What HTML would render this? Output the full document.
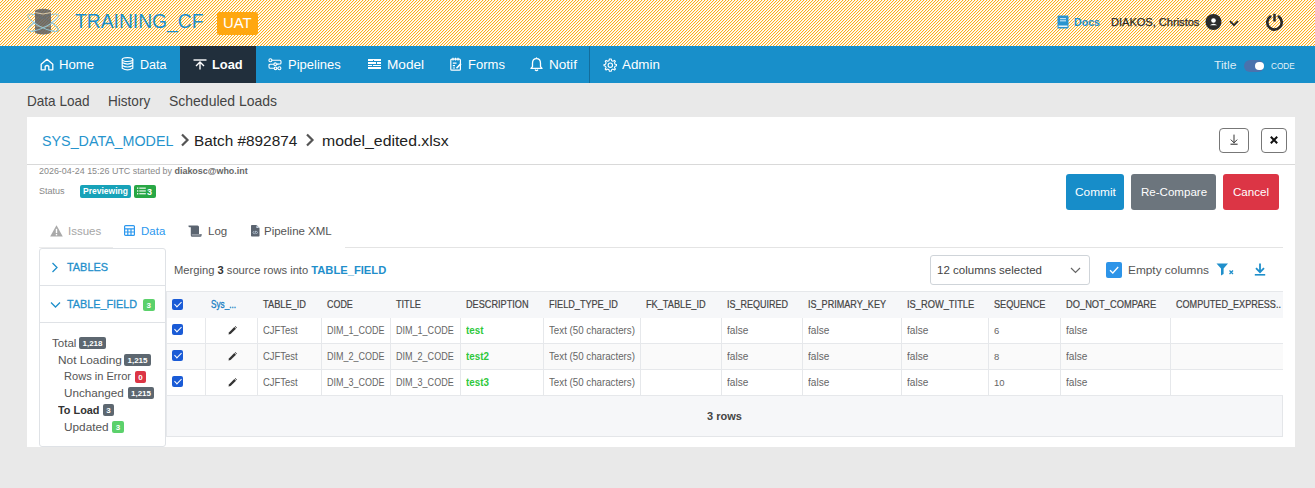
<!DOCTYPE html>
<html><head><meta charset="utf-8">
<style>
*{box-sizing:border-box;margin:0;padding:0}
html,body{width:1315px;height:488px;overflow:hidden}
body{background:#e9e9e9;font-family:"Liberation Sans",sans-serif;color:#333;position:relative}
.a{position:absolute;white-space:nowrap}
#nav{position:absolute;left:0;top:46px;width:1315px;height:37px;background:#188fca}
.nt{position:absolute;top:11px;color:#fff;font-size:13px;line-height:16px;white-space:nowrap}
.ic{position:absolute}
#card{position:absolute;left:27px;top:117px;width:1268px;height:330px;background:#fff}
.sub{position:absolute;top:93.3px;font-size:14.5px;line-height:16px;color:#444;white-space:nowrap}
.btn2{position:absolute;border:1px solid #777;border-radius:4px;background:#fff}
.btn{position:absolute;height:36px;border-radius:3px;color:#fff;font-size:12px;line-height:36px;text-align:center;white-space:nowrap}
.bt{top:185px;font-size:11.5px;line-height:14px;color:#fff}
.tab{position:absolute;top:223px;font-size:11.5px;line-height:16px;white-space:nowrap}
.lp{font-size:11px;line-height:14px;color:#1f8fcb;-webkit-text-stroke:0.3px currentColor}
.bdg{position:absolute;height:12px;border-radius:2px;color:#fff;font-size:8px;line-height:13.5px;font-weight:bold;text-align:center;white-space:nowrap}
.bdg.g{background:#5d6770}
.st{font-size:11.5px;line-height:14px;color:#555}
.cb{position:absolute;width:11px;height:11px;border-radius:2px;background:#1a5bd6}
.cb::after{content:"";position:absolute;left:3.5px;top:1.2px;width:3px;height:6px;border:solid #fff;border-width:0 1.6px 1.6px 0;transform:rotate(45deg)}
.th{position:absolute;top:297px;-webkit-text-stroke:0.2px currentColor;font-size:10.5px;line-height:14px;color:#444;white-space:nowrap}
.th.blue{color:#1a80c4;-webkit-text-stroke:0.35px currentColor}
.td{position:absolute;margin-top:5px;font-size:11px;line-height:14px;color:#666;white-space:nowrap}
.td.green{color:#2ec83c;font-weight:bold}
</style><style id="fit">
#title{transform:scaleX(0.918);transform-origin:0 0}
#uat{transform:scaleX(0.958);transform-origin:0 0}
#docs{transform:scaleX(0.966);transform-origin:0 0}
#user{transform:scaleX(1.004);transform-origin:0 0}
#n_title{transform:scaleX(1.051);transform-origin:0 0}
#n_code{transform:scaleX(0.860);transform-origin:0 0}
#n_home{transform:scaleX(1.015);transform-origin:0 0}
#n_data{transform:scaleX(0.968);transform-origin:0 0}
#n_load{transform:scaleX(0.988);transform-origin:0 0}
#n_pipe{transform:scaleX(0.999);transform-origin:0 0}
#n_model{transform:scaleX(1.047);transform-origin:0 0}
#n_forms{transform:scaleX(1.002);transform-origin:0 0}
#n_notif{transform:scaleX(1.044);transform-origin:0 0}
#n_admin{transform:scaleX(1.026);transform-origin:0 0}
#s1{transform:scaleX(0.935);transform-origin:0 0}
#s2{transform:scaleX(0.935);transform-origin:0 0}
#s3{transform:scaleX(0.964);transform-origin:0 0}
#bc1{transform:scaleX(0.923);transform-origin:0 0}
#bc2{transform:scaleX(0.990);transform-origin:0 0}
#bc3{transform:scaleX(1.020);transform-origin:0 0}
#meta{transform:scaleX(0.992);transform-origin:0 0}
#status{transform:scaleX(0.941);transform-origin:0 0}
#b_commit{transform:scaleX(1.030);transform-origin:0 0}
#b_rec{transform:scaleX(1.004);transform-origin:0 0}
#b_cancel{transform:scaleX(1.008);transform-origin:0 0}
#merge{transform:scaleX(1.016);transform-origin:0 0}
#st1{transform:scaleX(1.004);transform-origin:0 0}
#st2{transform:scaleX(1.029);transform-origin:0 0}
#st3{transform:scaleX(0.962);transform-origin:0 0}
#st4{transform:scaleX(1.018);transform-origin:0 0}
#st5{transform:scaleX(0.946);transform-origin:0 0}
#st6{transform:scaleX(1.028);transform-origin:0 0}
#lp1{transform:scaleX(0.991);transform-origin:0 0}
#lp2{transform:scaleX(0.983);transform-origin:0 0}
#selt{transform:scaleX(1.047);transform-origin:0 0}
#empt{transform:scaleX(1.077);transform-origin:0 0}
#h1{transform:scaleX(0.779);transform-origin:0 0}
#h2{transform:scaleX(0.881);transform-origin:0 0}
#h3{transform:scaleX(0.850);transform-origin:0 0}
#h4{transform:scaleX(0.867);transform-origin:0 0}
#h5{transform:scaleX(0.871);transform-origin:0 0}
#h6{transform:scaleX(0.868);transform-origin:0 0}
#h7{transform:scaleX(0.875);transform-origin:0 0}
#h8{transform:scaleX(0.857);transform-origin:0 0}
#h9{transform:scaleX(0.864);transform-origin:0 0}
#h10{transform:scaleX(0.886);transform-origin:0 0}
#h11{transform:scaleX(0.872);transform-origin:0 0}
#h12{transform:scaleX(0.886);transform-origin:0 0}
#h13{transform:scaleX(0.865);transform-origin:0 0}
#c0_2{transform:scaleX(0.860);transform-origin:0 0}
#c0_3{transform:scaleX(0.818);transform-origin:0 0}
#c0_4{transform:scaleX(0.821);transform-origin:0 0}
#c0_5{transform:scaleX(0.895);transform-origin:0 0}
#c0_6{transform:scaleX(0.884);transform-origin:0 0}
#c0_8{transform:scaleX(0.916);transform-origin:0 0}
#c0_9{transform:scaleX(0.916);transform-origin:0 0}
#c0_10{transform:scaleX(0.916);transform-origin:0 0}
#c0_12{transform:scaleX(0.916);transform-origin:0 0}
#c1_2{transform:scaleX(0.860);transform-origin:0 0}
#c1_3{transform:scaleX(0.818);transform-origin:0 0}
#c1_4{transform:scaleX(0.821);transform-origin:0 0}
#c1_5{transform:scaleX(0.891);transform-origin:0 0}
#c1_6{transform:scaleX(0.884);transform-origin:0 0}
#c1_8{transform:scaleX(0.916);transform-origin:0 0}
#c1_9{transform:scaleX(0.916);transform-origin:0 0}
#c1_10{transform:scaleX(0.916);transform-origin:0 0}
#c1_12{transform:scaleX(0.916);transform-origin:0 0}
#c2_2{transform:scaleX(0.860);transform-origin:0 0}
#c2_3{transform:scaleX(0.818);transform-origin:0 0}
#c2_4{transform:scaleX(0.821);transform-origin:0 0}
#c2_5{transform:scaleX(0.891);transform-origin:0 0}
#c2_6{transform:scaleX(0.884);transform-origin:0 0}
#c2_8{transform:scaleX(0.916);transform-origin:0 0}
#c2_9{transform:scaleX(0.916);transform-origin:0 0}
#c2_10{transform:scaleX(0.916);transform-origin:0 0}
#c2_12{transform:scaleX(0.916);transform-origin:0 0}
</style>
</head><body>
<svg width="1315" height="46" style="position:absolute;left:0;top:0" shape-rendering="crispEdges">
<defs><pattern id="stp" width="3" height="3" patternUnits="userSpaceOnUse">
<rect width="3" height="3" fill="#fff"/>
<rect x="2" y="0" width="1" height="1" fill="#ffae18"/><rect x="1" y="1" width="1" height="1" fill="#ffae18"/><rect x="0" y="2" width="1" height="1" fill="#ffae18"/>
<rect x="0" y="0" width="1" height="1" fill="#fff1d6"/><rect x="2" y="1" width="1" height="1" fill="#fff1d6"/><rect x="1" y="2" width="1" height="1" fill="#fff1d6"/>
</pattern></defs><rect width="1315" height="46" fill="url(#stp)"/></svg>

<!-- logo -->
<svg class="ic" style="left:22px;top:5px" width="44" height="35" viewBox="0 0 44 35">
 <defs><clipPath id="lowc"><rect x="0" y="17.75" width="44" height="20"/></clipPath></defs>
 <g fill="none" stroke="#98c8d4" stroke-width="1">
 <ellipse cx="21" cy="17.75" rx="17" ry="4.6" transform="rotate(27 21 17.75)"/>
 <ellipse cx="21" cy="17.75" rx="17" ry="4.6" transform="rotate(-27 21 17.75)"/>
 </g>
 <g opacity="0.86" fill="#5f5f5f">
 <ellipse cx="21" cy="6" rx="8" ry="2.2"/>
 <rect x="13" y="6" width="16" height="21.2"/>
 <ellipse cx="21" cy="27.2" rx="8" ry="2.2"/>
 </g>
 <path d="M13.3 7.6 Q21 10.4 28.7 7.6" stroke="#e8d6b0" stroke-width="0.9" fill="none"/>
 <path d="M13.3 20.8 Q21 23.6 28.7 20.8" stroke="#e8d6b0" stroke-width="0.7" fill="none" opacity="0.6"/>
 <g fill="none" stroke="#98c8d4" stroke-width="1" clip-path="url(#lowc)">
 <ellipse cx="21" cy="17.75" rx="17" ry="4.6" transform="rotate(27 21 17.75)"/>
 <ellipse cx="21" cy="17.75" rx="17" ry="4.6" transform="rotate(-27 21 17.75)"/>
 </g>
</svg>
<div class="a" id="title" style="left:75px;top:9px;font-size:21px;line-height:24px;color:#1d8fc9">TRAINING_CF</div>
<div class="a" style="left:217px;top:12px;width:41px;height:23px;background:#ffa70f;border-radius:3px"></div><div class="a" id="uat" style="left:223px;top:12px;color:#fff;font-size:15.5px;line-height:21.4px">UAT</div>

<!-- header right -->
<svg class="ic" style="left:1057px;top:15px" width="12" height="14" viewBox="0 0 12 14">
 <rect x="0.5" y="0.5" width="11" height="13" rx="1.2" fill="#2a94cf"/>
 <rect x="3" y="3" width="6" height="1.2" fill="#bfe2f5"/><rect x="3" y="5.2" width="6" height="1.2" fill="#bfe2f5"/>
 <rect x="1.5" y="10.5" width="9" height="1.5" fill="#e6f4fb"/>
</svg>
<div class="a" id="docs" style="left:1074px;top:15px;font-size:11px;line-height:14px;color:#1f8fcc;font-weight:bold">Docs</div>
<div class="a" id="user" style="left:1111px;top:15px;font-size:11px;line-height:14px;color:#2b2b2b;-webkit-text-stroke:0.25px currentColor">DIAKOS, Christos</div>
<svg class="ic" style="left:1205px;top:14px" width="17" height="16" viewBox="0 0 17 16">
 <circle cx="8.5" cy="8" r="8" fill="#2b2b2b"/>
 <circle cx="8.5" cy="6.5" r="2.3" fill="#fff"/>
 <path d="M4.8 11.2 Q8.5 8.2 12.2 11.2 Z" fill="#fff"/>
</svg>
<svg class="ic" style="left:1229px;top:19.5px" width="10" height="7" viewBox="0 0 10 7">
 <path d="M1 1.2 L5 5.2 L9 1.2" stroke="#2b2b2b" stroke-width="1.8" fill="none"/>
</svg>
<svg class="ic" style="left:1265px;top:12px" width="19" height="20" viewBox="0 0 19 20">
 <path d="M5.2 4.6 A7.2 7.2 0 1 0 13.8 4.6" stroke="#2b2b2b" stroke-width="2.7" fill="none" stroke-linecap="round"/>
 <line x1="9.5" y1="1.8" x2="9.5" y2="9.5" stroke="#2b2b2b" stroke-width="2.5" stroke-linecap="butt"/>
</svg>

<!-- nav -->
<div id="nav">
 <div style="position:absolute;left:180px;top:0;width:76px;height:37px;background:#212f3c"></div>
 <div style="position:absolute;left:589px;top:0;width:1px;height:37px;background:#136d9c"></div>
 <svg class="ic" style="left:40px;top:12px" width="14" height="13" viewBox="0 0 14 13">
  <path d="M1.2 6.2 L7 1.2 L12.8 6.2 L12.8 11.8 L8.8 11.8 L8.8 8.2 Q7 6.8 5.2 8.2 L5.2 11.8 L1.2 11.8 Z" stroke="#fff" stroke-width="1.3" fill="none" stroke-linejoin="round"/>
 </svg>
 <div class="nt" id="n_home" style="left:59px">Home</div>
 <svg class="ic" style="left:121px;top:11px" width="13" height="14" viewBox="0 0 13 14">
  <ellipse cx="6.5" cy="2.6" rx="5.3" ry="1.9" stroke="#fff" stroke-width="1.2" fill="none"/>
  <path d="M1.2 2.6 V11.2 Q6.5 14.6 11.8 11.2 V2.6 M1.2 5.6 Q6.5 8.6 11.8 5.6 M1.2 8.5 Q6.5 11.5 11.8 8.5" stroke="#fff" stroke-width="1.2" fill="none"/>
 </svg>
 <div class="nt" id="n_data" style="left:140px">Data</div>
 <svg class="ic" style="left:193px;top:13px" width="14" height="11" viewBox="0 0 14 11">
  <line x1="0.5" y1="1" x2="13.5" y2="1" stroke="#fff" stroke-width="1.4"/>
  <path d="M7 3 V10.5 M3 7 L7 3 L11 7" stroke="#fff" stroke-width="1.4" fill="none"/>
 </svg>
 <div class="nt" id="n_load" style="left:212px;font-weight:bold">Load</div>
 <svg class="ic" style="left:268px;top:12px" width="14" height="13" viewBox="0 0 14 13">
  <g stroke="#fff" stroke-width="1.1" fill="none">
  <circle cx="2.4" cy="2.2" r="1.5"/><path d="M3.9 2.2 H12 Q13 2.2 13 3.4 V5 Q13 6 12 6 H9"/>
  <circle cx="7.2" cy="6.2" r="1.3"/><path d="M5.9 6.2 H2.2 Q1 6.2 1 7.4 V9 Q1 10.3 2.2 10.3 H6"/>
  <circle cx="7.5" cy="10.3" r="1.3"/><circle cx="11.4" cy="10.3" r="1.5"/><path d="M8.8 10.3 H9.9 M9 6.2 H10.5"/>
  </g>
 </svg>
 <div class="nt" id="n_pipe" style="left:288px">Pipelines</div>
 <svg class="ic" style="left:367.5px;top:13px" width="13" height="10" viewBox="0 0 13 10" shape-rendering="crispEdges">
  <rect x="0" y="0.3" width="12.5" height="9.4" fill="#fff"/>
  <g fill="#188fca"><rect x="0" y="2.3" width="12.5" height="0.9"/><rect x="0" y="4.6" width="12.5" height="0.9"/><rect x="0" y="6.9" width="12.5" height="0.9"/>
  <rect x="5" y="1.2" width="0.9" height="1.1"/><rect x="8" y="3.2" width="0.9" height="1.4"/><rect x="4" y="5.5" width="0.9" height="1.4"/><rect x="7.5" y="7.8" width="0.9" height="1"/></g>
 </svg>
 <div class="nt" id="n_model" style="left:387px">Model</div>
 <svg class="ic" style="left:450px;top:11px" width="12" height="14" viewBox="0 0 12 14">
  <g stroke="#fff" stroke-width="1.2" fill="none">
  <rect x="0.8" y="2.2" width="9.6" height="11" rx="1"/><path d="M3 0.8 V3.4 M5.5 0.8 V3.4 M8 0.8 V3.4 M2.8 6.2 H6.5 M2.8 8.6 H5 M2.8 11 H5"/>
  <path d="M6.5 11.2 L11 6.6" stroke-width="1.6"/></g>
 </svg>
 <div class="nt" id="n_forms" style="left:468px">Forms</div>
 <svg class="ic" style="left:530px;top:11px" width="13" height="15" viewBox="0 0 13 15">
  <path d="M6.5 1.6 Q10.5 1.6 10.5 6.2 V9.6 L12 11.4 H1 L2.5 9.6 V6.2 Q2.5 1.6 6.5 1.6 Z" stroke="#fff" stroke-width="1.3" fill="none" stroke-linejoin="round"/>
  <path d="M5 12.6 Q6.5 14.6 8 12.6" stroke="#fff" stroke-width="1.3" fill="none"/>
  <line x1="6.5" y1="0.4" x2="6.5" y2="1.8" stroke="#fff" stroke-width="1.2"/>
 </svg>
 <div class="nt" id="n_notif" style="left:549px">Notif</div>
 <svg class="ic" style="left:603px;top:12px" width="14" height="14" viewBox="0 0 14 14">
  <path d="M7 1 L8.2 1 L8.6 2.7 L10 3.3 L11.5 2.4 L12.4 3.3 L11.5 4.8 L12.1 6.2 L13.6 6.5 V7.8 L12.1 8.2 L11.5 9.6 L12.4 11.1 L11.5 12 L10 11.1 L8.6 11.7 L8.2 13.3 H6.4 L6 11.7 L4.6 11.1 L3.1 12 L2.2 11.1 L3.1 9.6 L2.5 8.2 L1 7.8 V6.5 L2.5 6.2 L3.1 4.8 L2.2 3.3 L3.1 2.4 L4.6 3.3 L6 2.7 L6.4 1 Z" stroke="#fff" stroke-width="1.1" fill="none" stroke-linejoin="round"/>
  <circle cx="7.3" cy="7.2" r="2.2" stroke="#fff" stroke-width="1.1" fill="none"/>
 </svg>
 <div class="nt" id="n_admin" style="left:622px">Admin</div>
 <div class="a" id="n_title" style="left:1214px;top:11px;font-size:11.5px;line-height:16px;color:#dcecf6">Title</div>
 <div style="position:absolute;left:1244px;top:14px;width:20px;height:12px;border-radius:6px;background:#4a72ad"></div>
 <div style="position:absolute;left:1255px;top:15.8px;width:8.5px;height:8.5px;border-radius:50%;background:#fff"></div>
 <div class="a" id="n_code" style="left:1271px;top:12px;font-size:9.5px;line-height:16px;color:#e6f2f9">CODE</div>
</div>

<!-- sub nav -->
<div class="sub" id="s1" style="left:27px">Data Load</div>
<div class="sub" id="s2" style="left:108px">History</div>
<div class="sub" id="s3" style="left:169px">Scheduled Loads</div>

<div id="card"></div>
<!-- card header -->
<div class="a" id="bc1" style="left:41.5px;top:131.5px;font-size:15.5px;line-height:18px;color:#2694cd">SYS_DATA_MODEL</div>
<svg class="ic" style="left:180px;top:133px" width="10" height="14" viewBox="0 0 10 14"><path d="M2 1.5 L7.5 7 L2 12.5" stroke="#555" stroke-width="2.2" fill="none"/></svg>
<div class="a" id="bc2" style="left:194.3px;top:131.5px;font-size:15.5px;line-height:18px;color:#222">Batch #892874</div>
<svg class="ic" style="left:305px;top:133px" width="10" height="14" viewBox="0 0 10 14"><path d="M2 1.5 L7.5 7 L2 12.5" stroke="#555" stroke-width="2.2" fill="none"/></svg>
<div class="a" id="bc3" style="left:322px;top:131.5px;font-size:15.5px;line-height:18px;color:#222">model_edited.xlsx</div>
<div class="btn2" style="left:1219px;top:128px;width:30px;height:25px"></div>
<svg class="ic" style="left:1229.5px;top:133.5px" width="9" height="11" viewBox="0 0 9 11"><path d="M4 0.6 V9.2 M0.8 5.6 L4 8.8 L7.2 5.6" stroke="#333" stroke-width="1" fill="none"/><path d="M0.5 10.2 H7.6" stroke="#222" stroke-width="1"/></svg>
<div class="btn2" style="left:1261px;top:128px;width:26px;height:25px"></div>
<svg class="ic" style="left:1269px;top:135px" width="10" height="10" viewBox="0 0 10 10"><path d="M1.8 1.8 L8.2 8.2 M8.2 1.8 L1.8 8.2" stroke="#111" stroke-width="2"/></svg>
<div style="position:absolute;left:27px;top:164px;width:1268px;height:1px;background:#d9d9d9"></div>
<div class="a" id="meta" style="left:39px;top:166px;font-size:9px;line-height:11px;color:#888">2026-04-24 15:26 UTC started by <b style="color:#666">diakosc@who.int</b></div>
<div class="a" id="status" style="left:39px;top:184.5px;font-size:9.6px;line-height:12px;color:#888">Status</div>
<div class="a" id="prev" style="left:80px;top:185px;width:51px;height:12.5px;border-radius:2px;background:#17a2b8;color:#fff;font-size:8.5px;line-height:12.5px;font-weight:bold;text-align:center">Previewing</div>
<div class="a" style="left:134px;top:185px;width:22px;height:12.5px;border-radius:2px;background:#28a745"></div>
<svg class="ic" style="left:137px;top:187px" width="9" height="8" viewBox="0 0 9 8"><g fill="#fff"><rect x="0" y="0.5" width="1.3" height="1.3"/><rect x="0" y="3.3" width="1.3" height="1.3"/><rect x="0" y="6.1" width="1.3" height="1.3"/><rect x="2.3" y="0.6" width="6.5" height="1.1"/><rect x="2.3" y="3.4" width="6.5" height="1.1"/><rect x="2.3" y="6.2" width="6.5" height="1.1"/></g></svg>
<div class="a" style="left:147px;top:186px;font-size:9px;line-height:12px;color:#fff;font-weight:bold">3</div>
<div class="btn" style="left:1066px;top:174px;width:58px;background:#178dc9"></div><div class="a bt" id="b_commit" style="left:1075px">Commit</div>
<div class="btn" style="left:1131px;top:174px;width:85px;background:#6c757d"></div><div class="a bt" id="b_rec" style="left:1140.5px">Re-Compare</div>
<div class="btn" style="left:1223px;top:174px;width:56px;background:#dc3545"></div><div class="a bt" id="b_cancel" style="left:1233px">Cancel</div>
<!-- tabs -->
<svg class="ic" style="left:50px;top:225px" width="13" height="12" viewBox="0 0 13 12"><path d="M6.5 0.3 L12.8 11.5 H0.2 Z" fill="#a9a9a9"/><rect x="5.8" y="3.8" width="1.4" height="4.3" fill="#fff"/><rect x="5.8" y="9" width="1.4" height="1.4" fill="#fff"/></svg>
<div class="tab" id="t1" style="left:68px;color:#a6a6a6">Issues</div>
<svg class="ic" style="left:124px;top:225px" width="11" height="11" viewBox="0 0 11 11"><g stroke="#2c98ee" stroke-width="1.2" fill="none"><rect x="0.6" y="0.6" width="9.8" height="9.8" rx="1"/><path d="M0.6 3.8 H10.4 M0.6 7 H10.4 M3.8 3.8 V10.4 M7 3.8 V10.4"/></g></svg>
<div class="tab" id="t2" style="left:141px;color:#2c98ee">Data</div>
<svg class="ic" style="left:188px;top:224.5px" width="14" height="12" viewBox="0 0 14 12"><path d="M0.5 0.5 H9.5 Q11 0.5 11 2 V9 H13.6 V10.3 Q13.6 11.8 12.2 11.8 H4.2 Q2.8 11.8 2.8 10.3 V2.2 H1.5 Q0.5 2.2 0.5 1.2 Z" fill="#5b6470"/><path d="M3.8 9.9 H12.6" stroke="#dfe3e8" stroke-width="0.7"/></svg>
<div class="tab" id="t3" style="left:208px;color:#555">Log</div>
<svg class="ic" style="left:250.5px;top:225px" width="9" height="12" viewBox="0 0 9 12"><path d="M0 0.8 Q0 0 0.8 0 H5.6 L8.5 2.9 V10.8 Q8.5 11.4 7.8 11.4 H0.8 Q0 11.4 0 10.8 Z" fill="#5b6470"/><path d="M5.4 0.2 V3.1 H8.3" fill="#c9d6e3"/><path d="M3.2 6 L2 7.5 L3.2 9 M5.3 6 L6.5 7.5 L5.3 9 M4.6 5.8 L3.9 9.2" stroke="#cfe0f0" stroke-width="0.7" fill="none"/></svg>
<div class="tab" id="t4" style="left:264px;color:#555">Pipeline XML</div>
<div style="position:absolute;left:345px;top:247px;width:938px;height:1px;background:#e4e4e4"></div>
<div style="position:absolute;left:39px;top:247px;width:74px;height:1px;background:#ececec"></div>
<!-- left panel -->
<div style="position:absolute;left:39px;top:248px;width:127px;height:199px;border:1px solid #dfe2e6;border-radius:3px;background:#fff"></div>
<div style="position:absolute;left:40px;top:285px;width:125px;height:1px;background:#dfe2e6"></div>
<div style="position:absolute;left:40px;top:322px;width:125px;height:1px;background:#dfe2e6"></div>
<svg class="ic" style="left:51px;top:262px" width="8" height="11" viewBox="0 0 8 11"><path d="M1.5 1 L6 5.5 L1.5 10" stroke="#1f8fcb" stroke-width="1.3" fill="none"/></svg>
<div class="a lp" id="lp1" style="left:67px;top:260px">TABLES</div>
<svg class="ic" style="left:50px;top:301px" width="11" height="8" viewBox="0 0 11 8"><path d="M1 1.5 L5.5 6 L10 1.5" stroke="#1f8fcb" stroke-width="1.3" fill="none"/></svg>
<div class="a lp" id="lp2" style="left:67px;top:297px">TABLE_FIELD</div>
<div class="bdg" style="left:143px;top:299px;width:11.5px;height:11.5px;background:#5bd16b">3</div>
<div class="a st" id="st1" style="left:51.5px;top:336px">Total</div>
<div class="bdg g" style="left:79px;top:337px;width:27px">1,218</div>
<div class="a st" id="st2" style="left:57.5px;top:353px">Not Loading</div>
<div class="bdg g" style="left:124px;top:354px;width:27px">1,215</div>
<div class="a st" id="st3" style="left:64px;top:369px">Rows in Error</div>
<div class="bdg" style="left:135px;top:371px;width:11px;background:#dc3545">0</div>
<div class="a st" id="st4" style="left:64px;top:386px">Unchanged</div>
<div class="bdg g" style="left:128px;top:387px;width:26px">1,215</div>
<div class="a st" id="st5" style="left:57.5px;top:403px;font-weight:bold;color:#333">To Load</div>
<div class="bdg g" style="left:103px;top:404px;width:11px">3</div>
<div class="a st" id="st6" style="left:64px;top:420px">Updated</div>
<div class="bdg" style="left:112px;top:421px;width:12px;background:#5bd16b">3</div>
<!-- toolbar -->
<div class="a" id="merge" style="left:174px;top:263px;font-size:11px;line-height:14px;color:#555">Merging <b style="color:#333">3</b> source rows into <b style="color:#1f8fcb">TABLE_FIELD</b></div>
<div style="position:absolute;left:930px;top:255px;width:160px;height:30px;border:1px solid #cfd4d9;border-radius:3px;background:#fff"></div>
<div class="a" id="selt" style="left:937px;top:263px;font-size:11px;line-height:14px;color:#444">12 columns selected</div>
<svg class="ic" style="left:1070px;top:267px" width="11" height="7" viewBox="0 0 11 7"><path d="M1 1 L5.5 5.5 L10 1" stroke="#666" stroke-width="1.2" fill="none"/></svg>
<div style="position:absolute;left:1106px;top:262px;width:16px;height:16px;border-radius:2px;background:#2d94e8"></div>
<svg class="ic" style="left:1108px;top:264px" width="12" height="12" viewBox="0 0 12 12"><path d="M2 6.2 L4.8 9 L10.2 3" stroke="#fff" stroke-width="1.3" fill="none"/></svg>
<div class="a" id="empt" style="left:1128px;top:263px;font-size:11px;line-height:14px;color:#555">Empty columns</div>
<svg class="ic" style="left:1216px;top:263px" width="19" height="13" viewBox="0 0 19 13"><path d="M0.5 0.5 H12 L7.6 5.5 V11 L5 12.5 V5.5 Z" fill="#1f8fcb"/><path d="M13.5 7.5 L17 11 M17 7.5 L13.5 11" stroke="#1f8fcb" stroke-width="1.3"/></svg>
<svg class="ic" style="left:1254px;top:263px" width="12" height="13" viewBox="0 0 12 13"><path d="M6 0.5 V9 M2 5.2 L6 9.2 L10 5.2" stroke="#1f8fcb" stroke-width="1.8" fill="none"/><rect x="0.8" y="11" width="10.4" height="1.6" fill="#1f8fcb"/></svg>
<!--TABLE-->
<div style="position:absolute;left:166px;top:291px;width:1117px;height:27px;background:#f6f7f9;border-top:1px solid #e6e8eb"></div>
<div style="position:absolute;left:166px;top:318px;width:1117px;height:26px;background:#fff;border-bottom:1px solid #e6e8eb"></div>
<div style="position:absolute;left:166px;top:344px;width:1117px;height:26px;background:#fafafa;border-bottom:1px solid #e6e8eb"></div>
<div style="position:absolute;left:166px;top:370px;width:1117px;height:26px;background:#fff;border-bottom:1px solid #e6e8eb"></div>
<div style="position:absolute;left:166px;top:396px;width:1117px;height:41px;background:#f6f7f9;border-bottom:1px solid #e4e6e9;border-right:1px solid #e4e6e9"></div>
<div style="position:absolute;left:205px;top:318px;width:1px;height:77px;background:#e6e8eb"></div>
<div style="position:absolute;left:257px;top:318px;width:1px;height:77px;background:#e6e8eb"></div>
<div style="position:absolute;left:321px;top:318px;width:1px;height:77px;background:#e6e8eb"></div>
<div style="position:absolute;left:390px;top:318px;width:1px;height:77px;background:#e6e8eb"></div>
<div style="position:absolute;left:460px;top:318px;width:1px;height:77px;background:#e6e8eb"></div>
<div style="position:absolute;left:543px;top:318px;width:1px;height:77px;background:#e6e8eb"></div>
<div style="position:absolute;left:640px;top:318px;width:1px;height:77px;background:#e6e8eb"></div>
<div style="position:absolute;left:721px;top:318px;width:1px;height:77px;background:#e6e8eb"></div>
<div style="position:absolute;left:802px;top:318px;width:1px;height:77px;background:#e6e8eb"></div>
<div style="position:absolute;left:901px;top:318px;width:1px;height:77px;background:#e6e8eb"></div>
<div style="position:absolute;left:988px;top:318px;width:1px;height:77px;background:#e6e8eb"></div>
<div style="position:absolute;left:1060px;top:318px;width:1px;height:77px;background:#e6e8eb"></div>
<div style="position:absolute;left:1170px;top:318px;width:1px;height:77px;background:#e6e8eb"></div>
<div style="position:absolute;left:166px;top:291px;width:1px;height:146px;background:#e6e8eb"></div>
<div class="cb" style="left:172px;top:299px"></div>
<div class="th blue" id="h1" style="left:210.8px">Sys_...</div>
<div class="th" id="h2" style="left:262.6px">TABLE_ID</div>
<div class="th" id="h3" style="left:326.7px">CODE</div>
<div class="th" id="h4" style="left:395.8px">TITLE</div>
<div class="th" id="h5" style="left:466.0px">DESCRIPTION</div>
<div class="th" id="h6" style="left:548.7px">FIELD_TYPE_ID</div>
<div class="th" id="h7" style="left:645.6px">FK_TABLE_ID</div>
<div class="th" id="h8" style="left:726.8px">IS_REQUIRED</div>
<div class="th" id="h9" style="left:807.9px">IS_PRIMARY_KEY</div>
<div class="th" id="h10" style="left:906.9px">IS_ROW_TITLE</div>
<div class="th" id="h11" style="left:993.9px">SEQUENCE</div>
<div class="th" id="h12" style="left:1065.8px">DO_NOT_COMPARE</div>
<div class="th" id="h13" style="left:1175.9px">COMPUTED_EXPRESS..</div>
<div class="cb" style="left:172px;top:324px"></div>
<svg class="ic" style="left:228px;top:326px" width="9" height="9" viewBox="0 0 9 9"><path d="M0.5 8.5 L0.9 6.4 L6.3 1 L8 2.7 L2.6 8.1 Z" fill="#333"/><path d="M6.8 0.5 L7.3 0 L9 1.7 L8.5 2.2 Z" fill="#333"/></svg>
<div class="td" id="c0_2" style="left:262.6px;top:318px">CJFTest</div>
<div class="td" id="c0_3" style="left:326.7px;top:318px">DIM_1_CODE</div>
<div class="td" id="c0_4" style="left:395.8px;top:318px">DIM_1_CODE</div>
<div class="td green" id="c0_5" style="left:466.0px;top:318px">test</div>
<div class="td" id="c0_6" style="left:548.7px;top:318px">Text (50 characters)</div>
<div class="td" id="c0_8" style="left:726.8px;top:318px">false</div>
<div class="td" id="c0_9" style="left:807.9px;top:318px">false</div>
<div class="td" id="c0_10" style="left:906.9px;top:318px">false</div>
<div class="td" id="c0_11" style="left:993.9px;top:318px;font-size:9.5px;margin-top:6px">6</div>
<div class="td" id="c0_12" style="left:1065.8px;top:318px">false</div>
<div class="cb" style="left:172px;top:350px"></div>
<svg class="ic" style="left:228px;top:352px" width="9" height="9" viewBox="0 0 9 9"><path d="M0.5 8.5 L0.9 6.4 L6.3 1 L8 2.7 L2.6 8.1 Z" fill="#333"/><path d="M6.8 0.5 L7.3 0 L9 1.7 L8.5 2.2 Z" fill="#333"/></svg>
<div class="td" id="c1_2" style="left:262.6px;top:344px">CJFTest</div>
<div class="td" id="c1_3" style="left:326.7px;top:344px">DIM_2_CODE</div>
<div class="td" id="c1_4" style="left:395.8px;top:344px">DIM_2_CODE</div>
<div class="td green" id="c1_5" style="left:466.0px;top:344px">test2</div>
<div class="td" id="c1_6" style="left:548.7px;top:344px">Text (50 characters)</div>
<div class="td" id="c1_8" style="left:726.8px;top:344px">false</div>
<div class="td" id="c1_9" style="left:807.9px;top:344px">false</div>
<div class="td" id="c1_10" style="left:906.9px;top:344px">false</div>
<div class="td" id="c1_11" style="left:993.9px;top:344px;font-size:9.5px;margin-top:6px">8</div>
<div class="td" id="c1_12" style="left:1065.8px;top:344px">false</div>
<div class="cb" style="left:172px;top:376px"></div>
<svg class="ic" style="left:228px;top:378px" width="9" height="9" viewBox="0 0 9 9"><path d="M0.5 8.5 L0.9 6.4 L6.3 1 L8 2.7 L2.6 8.1 Z" fill="#333"/><path d="M6.8 0.5 L7.3 0 L9 1.7 L8.5 2.2 Z" fill="#333"/></svg>
<div class="td" id="c2_2" style="left:262.6px;top:370px">CJFTest</div>
<div class="td" id="c2_3" style="left:326.7px;top:370px">DIM_3_CODE</div>
<div class="td" id="c2_4" style="left:395.8px;top:370px">DIM_3_CODE</div>
<div class="td green" id="c2_5" style="left:466.0px;top:370px">test3</div>
<div class="td" id="c2_6" style="left:548.7px;top:370px">Text (50 characters)</div>
<div class="td" id="c2_8" style="left:726.8px;top:370px">false</div>
<div class="td" id="c2_9" style="left:807.9px;top:370px">false</div>
<div class="td" id="c2_10" style="left:906.9px;top:370px">false</div>
<div class="td" id="c2_11" style="left:993.9px;top:370px;font-size:9.5px;margin-top:6px">10</div>
<div class="td" id="c2_12" style="left:1065.8px;top:370px">false</div>
<div class="a" id="rows3" style="left:707px;top:409px;font-size:11px;line-height:14px;font-weight:bold;color:#444">3 rows</div>
<!--/TABLE-->
</body></html>
